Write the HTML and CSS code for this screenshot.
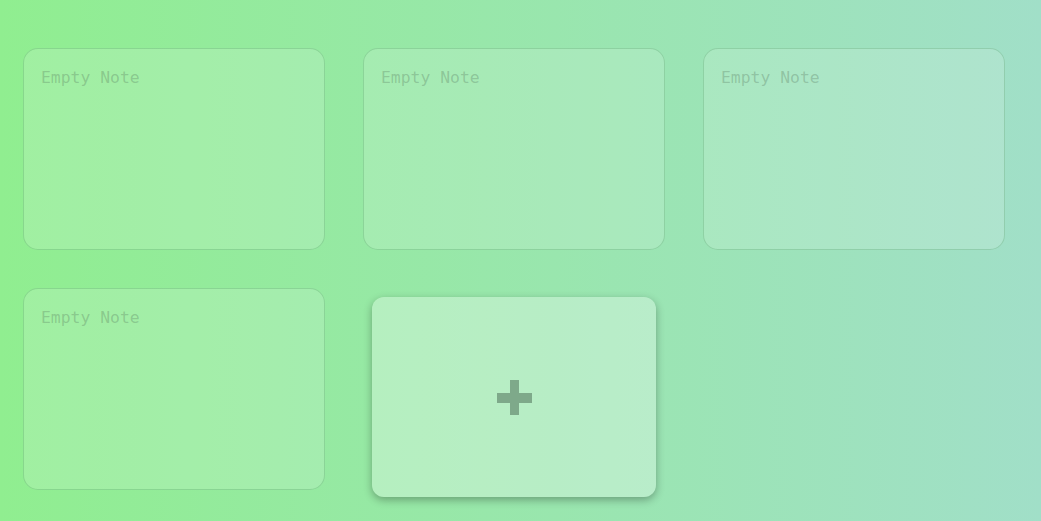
FILE: index.html
```html
<!DOCTYPE html>
<html>
<head>
<meta charset="utf-8">
<link rel="stylesheet" href="styles.css">
</head>
<body>
<div class="board">
  <div class="note"><div class="note-text">Empty Note</div></div>
  <div class="note"><div class="note-text">Empty Note</div></div>
  <div class="note"><div class="note-text">Empty Note</div></div>
  <div class="note"><div class="note-text">Empty Note</div></div>
  <div class="add-cell">
    <button class="add-btn" aria-label="Add note">
      <span class="plus"></span>
    </button>
  </div>
</div>
</body>
</html>
```
FILE: styles.css
```css
html, body {
  margin: 0;
  height: 100%;
}
body {
  background: linear-gradient(to right, #90ee90, #a1dfc8);
  font-family: "DejaVu Sans Mono", "Liberation Mono", monospace;
  overflow: hidden;
}
.board {
  display: grid;
  grid-template-columns: repeat(3, 302px);
  grid-auto-rows: 202px;
  column-gap: 38px;
  row-gap: 38px;
  padding: 48px 0 0 23px;
}
.note {
  box-sizing: border-box;
  border: 1px solid rgba(60, 140, 80, 0.25);
  border-radius: 15px;
  background: rgba(255, 255, 255, 0.15);
  padding: 19px 17px;
}
.note-text {
  font-size: 16.4px;
  line-height: 20px;
  color: rgba(80, 110, 85, 0.3);
}
.add-cell {
  display: flex;
  justify-content: center;
  align-items: flex-start;
}
.add-btn {
  margin-top: 9px;
  width: 284px;
  height: 200px;
  border: none;
  border-radius: 12px;
  background: rgba(255, 255, 255, 0.3);
  box-shadow: 0 3px 8px rgba(0, 0, 0, 0.3);
  display: flex;
  align-items: center;
  justify-content: center;
  padding: 0;
}
.plus {
  position: relative;
  width: 35px;
  height: 35px;
  margin-left: 1px;
  margin-top: 1px;
}
.plus::before, .plus::after {
  content: "";
  position: absolute;
  background: #7ea98a;
}
.plus::before {
  left: 0;
  right: 0;
  top: 13px;
  height: 10px;
}
.plus::after {
  top: 0;
  bottom: 0;
  left: 13px;
  width: 9px;
}
```
